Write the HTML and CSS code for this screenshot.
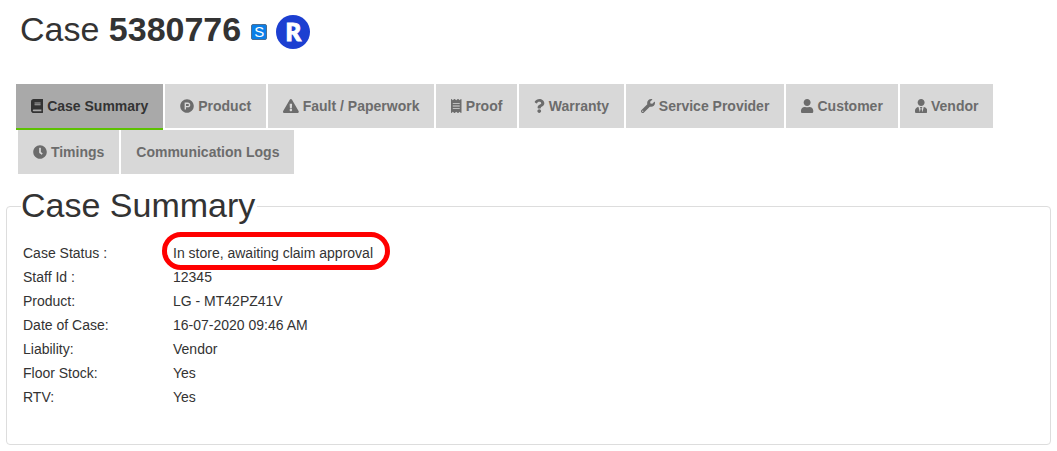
FILE: index.html
```
<!DOCTYPE html>
<html lang="en">
<head>
  <meta charset="utf-8">
  <title>Case 5380776</title>
  <link rel="stylesheet" href="styles.css">
</head>
<body>
  <h1 class="case-title">
    <span>Case <strong>5380776</strong></span>
    <span class="badge-s">S</span>
    <span class="badge-r">R</span>
  </h1>

  <nav class="tabs">
    <a href="#summary" class="tab active"><svg class="icon" viewBox="0 0 448 512"><path d="M448 360V24c0-13.300-10.700-24-24-24H96C43 0 0 43 0 96v320c0 53 43 96 96 96h328c13.300 0 24-10.700 24-24v-16c0-7.500-3.500-14.300-8.900-18.700-4.200-15.400-4.200-59.300 0-74.700 5.400-4.300 8.900-11.100 8.900-18.600zM128 134c0-3.300 2.700-6 6-6h212c3.300 0 6 2.700 6 6v20c0 3.300-2.700 6-6 6H134c-3.300 0-6-2.700-6-6v-20zm0 64c0-3.300 2.700-6 6-6h212c3.300 0 6 2.700 6 6v20c0 3.300-2.700 6-6 6H134c-3.300 0-6-2.700-6-6v-20zm253.400 250H96c-17.700 0-32-14.300-32-32 0-17.600 14.400-32 32-32h285.400c-1.900 17.100-1.900 46.900 0 64z"/></svg> Case Summary</a>
    <a href="#product" class="tab"><svg class="icon" viewBox="0 0 512 512"><path d="M326.300 218.800c0 20.500-16.700 37.200-37.200 37.200h-70.300v-74.400h70.300c20.500 0 37.200 16.700 37.200 37.200zM504 256c0 137-111 248-248 248S8 393 8 256 119 8 256 8s248 111 248 248zm-128.100-37.200c0-47.900-38.900-86.800-86.800-86.800H169.200v248h49.600v-74.400h70.300c47.900 0 86.800-38.900 86.800-86.800z"/></svg> Product</a>
    <a href="#fault" class="tab"><svg class="icon" viewBox="0 0 576 512"><path d="M569.517 440.013C587.975 472.007 564.806 512 527.940 512H48.054c-36.937 0-59.999-40.055-41.577-71.987L246.423 23.985c18.467-32.009 64.720-31.951 83.154 0l239.940 416.028zM288 354c-25.405 0-46 20.595-46 46s20.595 46 46 46 46-20.595 46-46-20.595-46-46-46zm-43.673-165.346l7.418 136c.347 6.364 5.609 11.346 11.982 11.346h48.546c6.373 0 11.635-4.982 11.982-11.346l7.418-136c.375-6.874-5.098-12.654-11.982-12.654h-63.383c-6.884 0-12.356 5.780-11.981 12.654z"/></svg> Fault / Paperwork</a>
    <a href="#proof" class="tab"><svg class="icon" viewBox="0 0 384 512"><path d="M358.400 3.200L320 48 265.600 3.200a15.900 15.900 0 0 0-19.200 0L192 48 137.600 3.200a15.900 15.900 0 0 0-19.200 0L64 48 25.600 3.200C15-4.700 0 2.800 0 16v480c0 13.200 15 20.700 25.600 12.800L64 464l54.400 44.800a15.900 15.900 0 0 0 19.200 0L192 464l54.400 44.800a15.900 15.900 0 0 0 19.200 0L320 464l38.400 44.800c10.500 7.900 25.600.4 25.600-12.800V16c0-13.200-15-20.700-25.600-12.800zM320 360c0 4.400-3.600 8-8 8H72c-4.400 0-8-3.600-8-8v-16c0-4.400 3.600-8 8-8h240c4.400 0 8 3.600 8 8v16zm0-96c0 4.400-3.600 8-8 8H72c-4.400 0-8-3.600-8-8v-16c0-4.400 3.600-8 8-8h240c4.400 0 8 3.600 8 8v16zm0-96c0 4.400-3.600 8-8 8H72c-4.400 0-8-3.600-8-8v-16c0-4.400 3.600-8 8-8h240c4.400 0 8 3.600 8 8v16z"/></svg> Proof</a>
    <a href="#warranty" class="tab"><svg class="icon" viewBox="0 0 384 512"><path d="M202.021 0C122.202 0 70.503 32.703 29.914 91.026c-7.363 10.580-5.093 25.086 5.178 32.874l43.138 32.709c10.373 7.865 25.132 6.026 33.253-4.148 25.049-31.381 43.630-49.449 82.757-49.449 30.764 0 68.816 19.799 68.816 49.631 0 22.552-18.617 34.134-48.993 51.164-35.423 19.860-82.299 44.576-82.299 106.405V320c0 13.255 10.745 24 24 24h72.471c13.255 0 24-10.745 24-24v-5.773c0-42.860 125.268-44.645 125.268-160.627C377.504 66.256 286.902 0 202.021 0zM192 373.459c-38.196 0-69.271 31.075-69.271 69.271 0 38.195 31.075 69.270 69.271 69.270s69.271-31.075 69.271-69.271-31.075-69.270-69.271-69.270z"/></svg> Warranty</a>
    <a href="#service" class="tab"><svg class="icon" viewBox="0 0 512 512"><path d="M507.730 109.100c-2.240-9.030-13.540-12.090-20.120-5.510l-74.360 74.360-67.880-11.310-11.310-67.880 74.360-74.360c6.620-6.620 3.430-17.900-5.660-20.160-47.380-11.740-99.550.91-136.580 37.930-39.640 39.640-50.550 97.100-34.050 147.200L18.740 402.760c-24.990 24.990-24.990 65.510 0 90.500 24.990 24.990 65.510 24.990 90.500 0l213.210-213.210c50.120 16.710 107.470 5.680 147.370-34.220 37.070-37.070 49.700-89.320 37.910-136.730zM64 472c-13.250 0-24-10.750-24-24 0-13.260 10.750-24 24-24s24 10.740 24 24c0 13.250-10.750 24-24 24z"/></svg> Service Provider</a>
    <a href="#customer" class="tab"><svg class="icon" viewBox="0 0 448 512"><path d="M224 256c70.700 0 128-57.300 128-128S294.700 0 224 0 96 57.300 96 128s57.300 128 128 128zm89.600 32h-16.700c-22.200 10.200-46.900 16-72.900 16s-50.600-5.800-72.900-16h-16.700C60.200 288 0 348.200 0 422.400V464c0 26.500 21.500 48 48 48h352c26.500 0 48-21.500 48-48v-41.600c0-74.200-60.200-134.400-134.400-134.400z"/></svg> Customer</a>
    <a href="#vendor" class="tab"><svg class="icon" viewBox="0 0 448 512"><path d="M224 256c70.700 0 128-57.300 128-128S294.700 0 224 0 96 57.300 96 128s57.300 128 128 128zm95.800 32.600L272 480l-32-136 32-56h-96l32 56-32 136-47.800-191.400C56.900 292 0 350.300 0 422.400V464c0 26.500 21.500 48 48 48h352c26.500 0 48-21.500 48-48v-41.600c0-72.100-56.900-130.400-128.200-133.800z"/></svg> Vendor</a>
    <a href="#timings" class="tab"><svg class="icon" viewBox="0 0 512 512"><path d="M256 8C119 8 8 119 8 256s111 248 248 248 248-111 248-248S393 8 256 8zm92.490 313l-20 25a16 16 0 0 1-22.490 2.500l-67-49.720a40 40 0 0 1-15-31.230V112a16 16 0 0 1 16-16h32a16 16 0 0 1 16 16v144l58 42.500a16 16 0 0 1 2.490 22.500z"/></svg> Timings</a>
    <a href="#logs" class="tab">Communication Logs</a>
  </nav>

  <fieldset class="panel" id="summary">
    <legend>Case Summary</legend>
    <dl class="details">
      <dt>Case Status :</dt>
      <dd><span class="highlight">In store, awaiting claim approval</span></dd>
      <dt>Staff Id :</dt>
      <dd>12345</dd>
      <dt>Product:</dt>
      <dd>LG - MT42PZ41V</dd>
      <dt>Date of Case:</dt>
      <dd>16-07-2020 09:46 AM</dd>
      <dt>Liability:</dt>
      <dd>Vendor</dd>
      <dt>Floor Stock:</dt>
      <dd>Yes</dd>
      <dt>RTV:</dt>
      <dd>Yes</dd>
    </dl>
  </fieldset>
</body>
</html>
```
FILE: styles.css
```
:root {
  --text-color: #333333;
  --tab-bg: #d8d8d8;
  --tab-text: #6c6c6c;
  --tab-active-bg: #a9a9a9;
  --accent-color: #5cc100;
  --border-color: #dddddd;
  --highlight-color: #ff0000;
}

body {
  margin: 0;
  padding: 9px 6px 6px;
  font-family: "Liberation Sans", Arial, Helvetica, sans-serif;
  font-size: 14px;
  line-height: 24px;
  color: var(--text-color);
  background-color: #ffffff;
}

.case-title {
  display: flex;
  align-items: center;
  margin: 0 0 35px;
  padding-left: 14px;
  font-size: 34px;
  font-weight: normal;
  line-height: 40px;
}

.badge-s {
  box-sizing: border-box;
  width: 16px;
  height: 16px;
  margin: 6px 9px 0 10px;
  border: 1px solid #4c6f92;
  border-radius: 2px;
  background-color: #0a7fe8;
  color: #ffffff;
  font-size: 15px;
  line-height: 14px;
  text-align: center;
}

.badge-r {
  width: 34px;
  height: 34px;
  margin-top: 6px;
  border-radius: 50%;
  background-color: #1c3fd1;
  color: #ffffff;
  font-family: Lato, "Liberation Sans", sans-serif;
  font-size: 24px;
  font-weight: 900;
  line-height: 34px;
  text-align: center;
  -webkit-text-stroke: 1px #ffffff;
}

.tabs {
  display: flex;
  flex-wrap: wrap;
  align-items: flex-start;
  padding-left: 10px;
}

.tab {
  margin-left: 2px;
  padding: 10px 15px;
  background-color: var(--tab-bg);
  color: var(--tab-text);
  font-weight: bold;
  text-decoration: none;
  white-space: nowrap;
}

.tab.active {
  margin-left: 0;
  border-bottom: 2px solid var(--accent-color);
  background-color: var(--tab-active-bg);
  color: var(--text-color);
}

.icon {
  height: 14px;
  fill: currentColor;
  vertical-align: -2px;
}

.panel {
  margin: 11px 0 0;
  padding: 14px 16px 35px;
  border: 1px solid var(--border-color);
  border-radius: 4px;
}

.panel legend {
  margin-left: -2px;
  padding: 0 2px 2px 0;
  font-size: 34px;
  line-height: 40px;
}

.details {
  display: grid;
  grid-template-columns: 150px 1fr;
  margin: 0;
}

.details dd {
  margin: 0;
}

/* Ring drawn around the current status */
.highlight {
  position: relative;
}

.highlight::after {
  content: "";
  position: absolute;
  inset: -13px -17px -9px -11px;
  border: 5px solid var(--highlight-color);
  border-radius: 20px;
}
```
